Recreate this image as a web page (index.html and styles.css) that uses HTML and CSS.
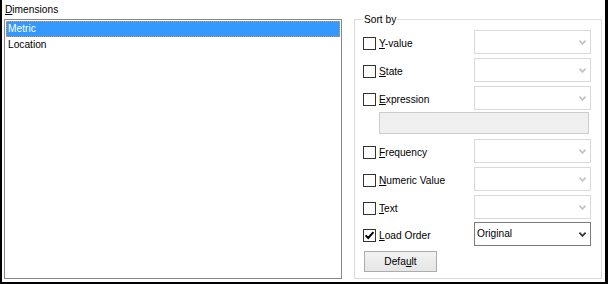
FILE: index.html
```html
<!DOCTYPE html>
<html>
<head>
<meta charset="utf-8">
<link rel="stylesheet" href="styles.css">
</head>
<body>
<div class="frame">
  <div class="dims">
    <div class="caption"><u>D</u>imensions</div>
    <div class="listbox">
      <div class="item sel">Metric</div>
      <div class="item">Location</div>
    </div>
  </div>
  <fieldset class="sortby">
    <legend class="legend">Sort by</legend>
    <div class="row">
      <div class="check"><span class="box"></span><span class="lbl"><u>Y</u>-value</span></div>
      <div class="combo disabled"><span class="val"></span><svg class="arrow" width="7" height="5" viewBox="0 0 7 5"><polyline points="0.4,0.6 3.5,3.9 6.6,0.6" fill="none" stroke="#c4c4c4" stroke-width="1.7"/></svg></div>
    </div>
    <div class="row r2">
      <div class="check"><span class="box"></span><span class="lbl"><u>S</u>tate</span></div>
      <div class="combo disabled"><span class="val"></span><svg class="arrow" width="7" height="5" viewBox="0 0 7 5"><polyline points="0.4,0.6 3.5,3.9 6.6,0.6" fill="none" stroke="#c4c4c4" stroke-width="1.7"/></svg></div>
    </div>
    <div class="row r2">
      <div class="check"><span class="box"></span><span class="lbl"><u>E</u>xpression</span></div>
      <div class="combo disabled"><span class="val"></span><svg class="arrow" width="7" height="5" viewBox="0 0 7 5"><polyline points="0.4,0.6 3.5,3.9 6.6,0.6" fill="none" stroke="#c4c4c4" stroke-width="1.7"/></svg></div>
    </div>
    <div class="exprbox"></div>
    <div class="row r5">
      <div class="check"><span class="box"></span><span class="lbl"><u>F</u>requency</span></div>
      <div class="combo disabled"><span class="val"></span><svg class="arrow" width="7" height="5" viewBox="0 0 7 5"><polyline points="0.4,0.6 3.5,3.9 6.6,0.6" fill="none" stroke="#c4c4c4" stroke-width="1.7"/></svg></div>
    </div>
    <div class="row r2">
      <div class="check"><span class="box"></span><span class="lbl"><u>N</u>umeric Value</span></div>
      <div class="combo disabled"><span class="val"></span><svg class="arrow" width="7" height="5" viewBox="0 0 7 5"><polyline points="0.4,0.6 3.5,3.9 6.6,0.6" fill="none" stroke="#c4c4c4" stroke-width="1.7"/></svg></div>
    </div>
    <div class="row r2">
      <div class="check"><span class="box"></span><span class="lbl"><u>T</u>ext</span></div>
      <div class="combo disabled"><span class="val"></span><svg class="arrow" width="7" height="5" viewBox="0 0 7 5"><polyline points="0.4,0.6 3.5,3.9 6.6,0.6" fill="none" stroke="#c4c4c4" stroke-width="1.7"/></svg></div>
    </div>
    <div class="row r3">
      <div class="check"><span class="box checked"><svg width="11" height="11" viewBox="0 0 11 11"><polyline points="1.6,5.4 4.2,8 9.4,2.2" fill="none" stroke="#000" stroke-width="2"/></svg></span><span class="lbl"><u>L</u>oad Order</span></div>
      <div class="combo enabled"><span class="val">Original</span><svg class="arrow" width="7" height="5" viewBox="0 0 7 5"><polyline points="0.4,0.6 3.5,3.9 6.6,0.6" fill="none" stroke="#333" stroke-width="1.7"/></svg></div>
    </div>
    <div class="btnrow"><button class="btn">Defa<u>u</u>lt</button></div>
  </fieldset>
</div>
</body>
</html>
```

FILE: styles.css
```css
html, body {
  margin: 0;
  padding: 0;
  background: #ffffff;
}
body {
  font-family: "Liberation Sans", Arial, sans-serif;
  font-size: 10.2px;
  color: #000;
}
.frame {
  width: 608px;
  height: 284px;
  box-sizing: border-box;
  border-style: solid;
  border-color: #000;
  border-width: 0 3px 2px 2px;
  padding: 3px 3px 3px 2px;
  display: flex;
  column-gap: 12px;
  background: #fff;
}
.dims {
  width: 338px;
  display: flex;
  flex-direction: column;
}
.caption {
  height: 13px;
  line-height: 13px;
  padding-left: 1px;
  margin-bottom: 3px;
}
.listbox {
  flex: 1;
  box-sizing: border-box;
  border: 1px solid #828790;
  padding: 1px;
  background: #fff;
}
.item {
  height: 16px;
  line-height: 16px;
  padding-left: 2px;
  box-sizing: border-box;
}
.item.sel {
  background: #3399ff;
  color: #fff;
  outline: 1px dotted #e8923a;
  outline-offset: -1px;
}
.sortby {
  width: 248px;
  box-sizing: border-box;
  margin: 10px 0 0 0;
  border: 1px solid #dcdcdc;
  padding: 4px 10px 0 8px;
  min-width: 0;
}
.legend {
  padding: 0 1px;
  margin-left: 0;
  line-height: 13px;
  height: 13px;
}
.row {
  display: flex;
  height: 24px;
  align-items: flex-start;
}
.row.r2 { margin-top: 4px; }
.row.r3 { margin-top: 3px; }
.row.r5 { margin-top: 5px; }
.check {
  width: 111px;
  display: flex;
  align-items: flex-start;
  margin-top: 7px;
  height: 13px;
  line-height: 13px;
}
.box {
  width: 13px;
  height: 13px;
  box-sizing: border-box;
  border: 1px solid #333333;
  background: #fff;
  display: block;
  flex: none;
}
.box svg {
  display: block;
}
.lbl {
  margin-left: 3px;
  white-space: nowrap;
}
.combo {
  width: 117px;
  height: 24px;
  box-sizing: border-box;
  border: 1px solid #d9d9d9;
  background: #fff;
  display: flex;
  align-items: center;
  padding: 0 4px 2px 2px;
  line-height: 13px;
}
.combo.enabled {
  border-color: #7a7a7a;
}
.combo .val {
  flex: 1;
}
.arrow {
  display: block;
  margin-top: 2px;
}
.exprbox {
  margin: 2px 0 0 16px;
  width: 210px;
  height: 22px;
  box-sizing: border-box;
  border: 1px solid #cccccc;
  background: #f0f0f0;
}
.btnrow {
  margin-top: 5px;
  padding-left: 1px;
  display: flex;
}
.btn {
  width: 73px;
  height: 21px;
  box-sizing: border-box;
  border: 1px solid #acacac;
  background: linear-gradient(#f2f2f2, #e6e6e6);
  font-family: "Liberation Sans", Arial, sans-serif;
  font-size: 10.2px;
  color: #000;
  padding: 0;
  line-height: 13px;
  border-radius: 0;
}
```
